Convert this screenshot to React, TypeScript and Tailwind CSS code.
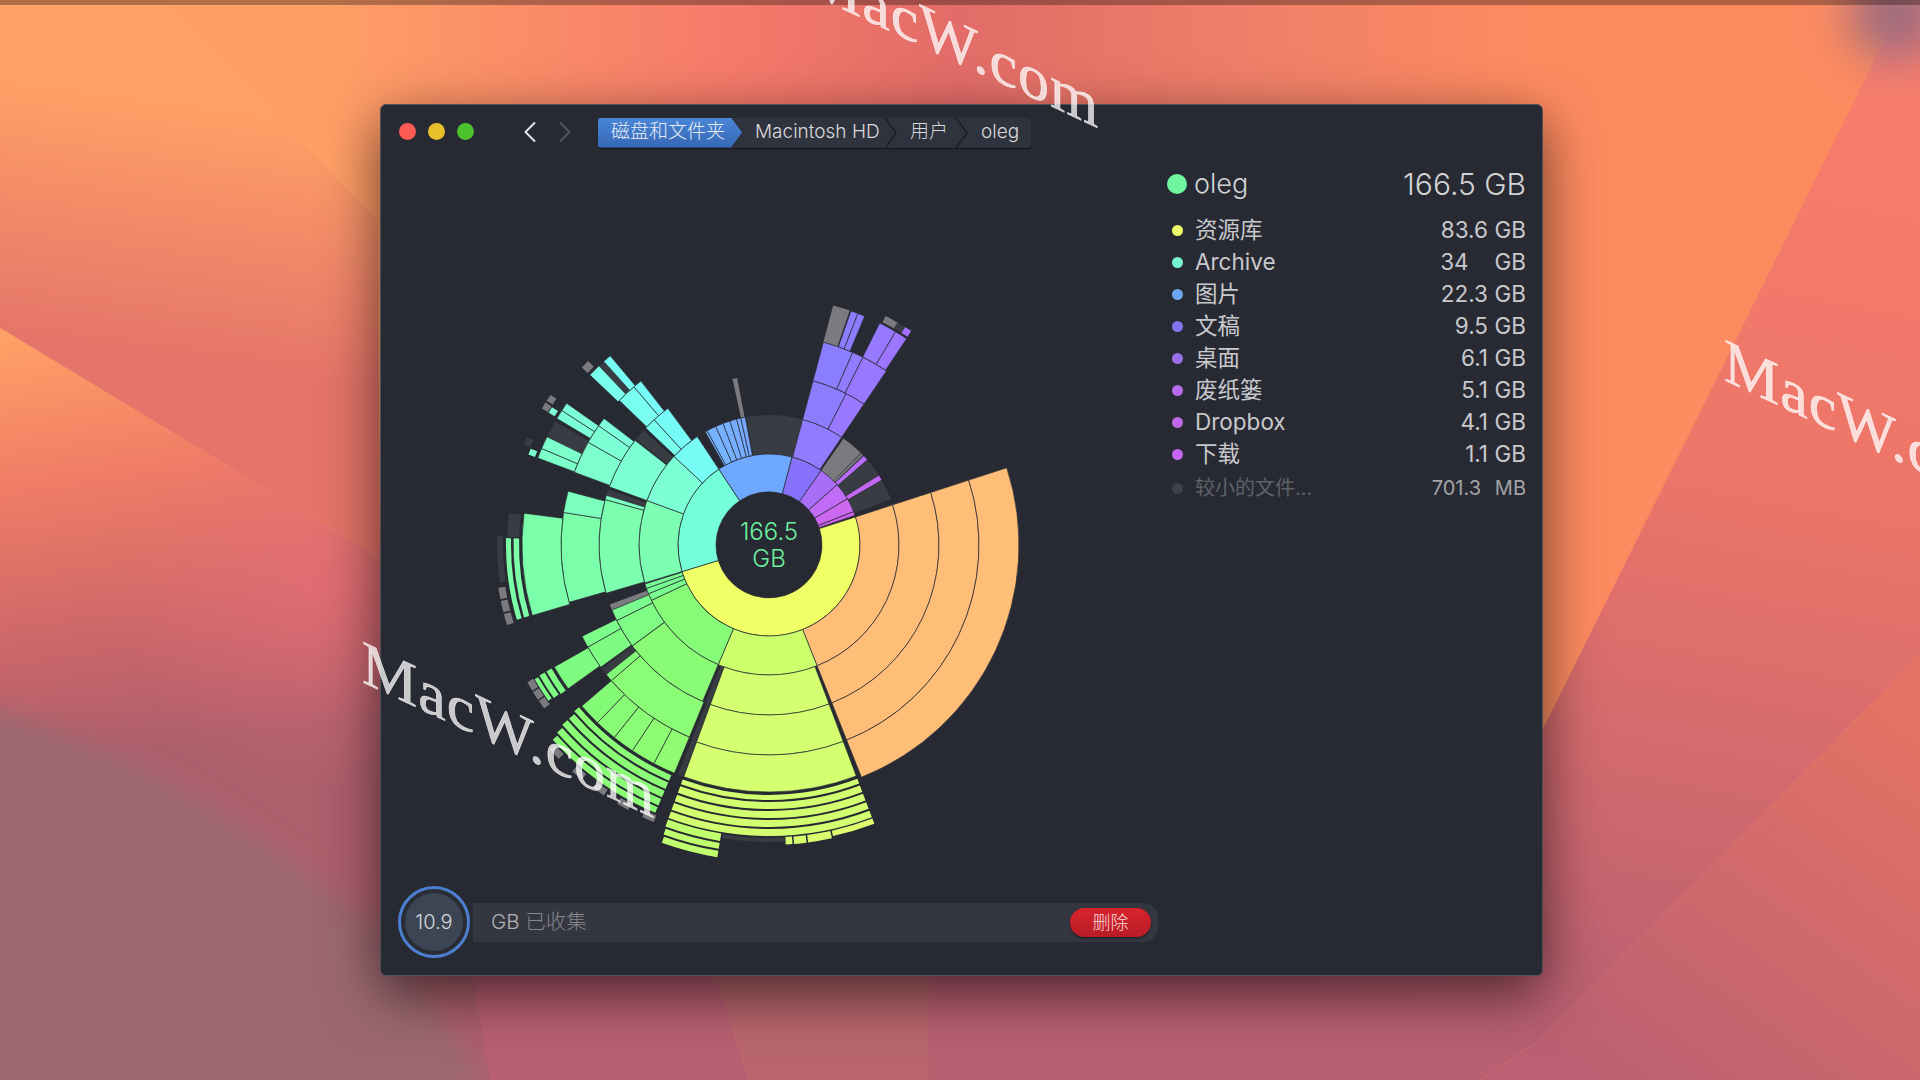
import { ChevronLeft, ChevronRight } from "lucide-react";

// clockwise degrees from 12 o'clock
type Seg = [number, number, number, number, string?];

const DARK = "#3a3c43";
const GREY = "#7b7b7f";
const ORANGE = "#ffbe78";

const STOPS: [number, string][] = [
  [159, "#e2fb6e"],
  [180, "#d2ff70"],
  [198, "#bcff6e"],
  [205, "#90fc72"],
  [230, "#82fb78"],
  [250, "#78fd94"],
  [270, "#7cffb0"],
  [295, "#7cffcc"],
  [308, "#7cffdc"],
  [318, "#78fff2"],
  [325, "#74f4ff"],
  [328, "#78b8ff"],
  [350, "#74a8ff"],
  [375, "#8480ff"],
  [390, "#9878ff"],
  [400, "#a870ff"],
  [415, "#c068f8"],
  [430, "#d060f0"],
];

function colorAt(deg: number) {
  const a = deg < 72 ? deg + 360 : deg;
  for (let i = 1; i < STOPS.length; i++) {
    if (a <= STOPS[i][0]) {
      const [a0, c0] = STOPS[i - 1];
      const [a1, c1] = STOPS[i];
      const t = Math.max(0, (a - a0) / (a1 - a0));
      const mix = (p: number) =>
        Math.round(parseInt(c0.slice(p, p + 2), 16) * (1 - t) + parseInt(c1.slice(p, p + 2), 16) * t);
      return `rgb(${mix(1)},${mix(3)},${mix(5)})`;
    }
  }
  return STOPS[STOPS.length - 1][1];
}

const CX = 388;
const CY = 387;

function arc(r0: number, r1: number, a0: number, a1: number) {
  const pt = (r: number, a: number) => {
    const t = (a * Math.PI) / 180;
    return `${(CX + r * Math.sin(t)).toFixed(2)} ${(CY - r * Math.cos(t)).toFixed(2)}`;
  };
  const big = a1 - a0 > 180 ? 1 : 0;
  return `M${pt(r0, a0)}A${r0} ${r0} 0 ${big} 1 ${pt(r0, a1)}L${pt(r1, a1)}A${r1} ${r1} 0 ${big} 0 ${pt(r1, a0)}Z`;
}

const SOLID: Seg[] = [
  // first ring
  [53, 91, 72, 253, "#f0ff66"],
  [53, 91, 253, 326.5, "#74ffd8"],
  [53, 91, 326.5, 374.7, "#6fa8ff"],
  [53, 91, 14.7, 35, "#8672fa"],
  [53, 91, 35, 48.5, "#a86ef8"],
  [53, 91, 48.5, 59.5, "#c06cf6"],
  [53, 91, 59.5, 68.5, "#cc68f0"],
  [53, 91, 68.5, 71, "#d060f0"],

  // orange branch
  [91, 130, 72, 158.3, ORANGE],
  [130, 170, 72, 158.3, ORANGE],
  [170, 210, 72, 158.3, ORANGE],
  [210, 250, 72, 158.3, ORANGE],

  // yellow green branch
  [91, 130, 158.3, 203, "#ccff6c"],
  [130, 170, 159.3, 200.2, "#d4ff70"],
  [170, 210, 159.3, 200.2, "#d4ff70"],
  [210, 247, 159.3, 200.2, "#d4ff70"],

  // green branch
  [91, 130, 203, 244.8],
  [91, 130, 244.8, 248],
  [91, 130, 248, 250.5],
  [91, 130, 250.5, 252.6],
  [130, 170, 203, 233.5],
  [130, 170, 233.6, 243.6],
  [130, 170, 243.6, 247.5],
  [170, 208, 202.5, 229.3],
  [208, 247, 202.5, 207.8],
  [208, 247, 207.8, 213.6],
  [208, 247, 213.6, 218.8],
  [208, 247, 218.8, 224],
  [208, 247, 224, 229.3],
  [170, 208, 229.3, 231.5],
  [170, 208, 234, 240.6],
  [170, 208, 240.6, 244],
  [208, 247, 234.4, 240.4],

  // mint branch
  [91, 130, 253, 290],
  [91, 130, 290, 313],
  [91, 130, 313, 326.5],
  [130, 170, 253.5, 285.5],
  [130, 170, 285.5, 287],
  [130, 170, 290, 308],
  [130, 170, 313.5, 317.5],
  [130, 170, 317.5, 323.5],
  [170, 208, 254, 279],
  [170, 208, 279, 285],
  [170, 208, 290.5, 299.6],
  [170, 208, 299.6, 305],
  [170, 208, 305, 307.5],
  [170, 208, 314, 319.5],
  [170, 208, 319.5, 322],
  [208, 247, 253.4, 277.4],
  [208, 247, 290.6, 293],
  [208, 247, 293, 296],
  [208, 247, 300.8, 303],
  [208, 247, 303, 305],
  [208, 247, 313.5, 316.5],
  [208, 247, 318, 320],

  // pictures fan
  [91, 130, 330.6, 331.6],
  [91, 130, 331.6, 335.8],
  [91, 130, 335.8, 339.3],
  [91, 130, 339.3, 342.5],
  [91, 130, 342.5, 345.6],
  [91, 130, 345.6, 347.5],
  [91, 130, 347.5, 349.5],

  // documents
  [91, 130, 15, 34],
  [130, 170, 15, 27],
  [130, 170, 27, 34],
  [170, 210, 15, 23.5],
  [170, 210, 23.5, 26.6],
  [170, 210, 26.6, 34],
  [210, 248, 19.3, 21],
  [210, 248, 21, 22.7],
  [210, 248, 26.5, 30.7],
  [210, 248, 30.7, 33.7],
];

// flat pieces and thin strips, no outline
const FLAT: Seg[] = [
  [91, 130, 350, 375, DARK],
  [130, 170, 347.6, 349.2, GREY],
  [210, 248, 15, 19, GREY],
  [250, 257, 27, 30, GREY],
  [250, 257, 30, 32, DARK],
  [250, 257, 32, 33.6, "#a070ff"],
  [91, 130, 35, 45, GREY],
  [91, 130, 45.3, 46.3, GREY],
  [91, 130, 46.8, 49, "#b86cf8"],
  [91, 130, 49.3, 57.5, DARK],
  [91, 130, 57.7, 60, "#c468f4"],
  [91, 130, 60.3, 69.5, DARK],

  [130, 170, 200.4, 202, DARK],
  [170, 247, 200.4, 201.6, DARK],
  [130, 170, 247.5, 249.5, GREY],
  [170, 208, 231.5, 233.5, DARK],
  [130, 170, 287, 289, DARK],
  [130, 170, 308.5, 312.5, DARK],
  [208, 247, 296, 300, DARK],
  [208, 247, 316.5, 318, DARK],

  [250, 256, 234.4, 240.4],
  [258, 264, 234.6, 240.4],
  [266, 270, 234.8, 240.2],
  [271, 278, 234, 235.9, GREY],
  [271, 278, 236.2, 238.1, GREY],
  [271, 278, 238.4, 240.4, GREY],

  [250, 255.5, 253.5, 271.5],
  [258, 263, 253.5, 271.5],
  [250, 262, 271.8, 277, DARK],
  [266, 272, 262, 272, DARK],
  [267, 274, 253, 255.4, GREY],
  [267, 274, 255.8, 258.2, GREY],
  [267, 274, 258.6, 261, GREY],
  [250, 257, 290.6, 292, "#7cffd0"],
  [258, 265, 292.3, 294, DARK],
  [250, 257, 301, 302.4, "#7cffd8"],
  [258, 265, 301, 302.5, GREY],
  [258, 265, 303, 304.5, GREY],
  [250, 258, 313.5, 315.5, GREY],

  // rings under the yellow green branch
  [250, 255, 159.3, 200.2],
  [257, 264, 159.3, 200.2],
  [266, 273, 159.3, 200.2],
  [275, 282, 159.3, 200.2],
  [284, 291, 159.3, 200.2],
  [292.5, 298, 159.3, 167.6],
  [292.5, 300, 167.9, 172.5],
  [292.5, 300, 172.8, 175.2],
  [292.5, 300, 175.5, 176.8],
  [293, 297, 177, 189, DARK],
  [292.5, 300, 189.4, 200.2],
  [302, 308, 189.4, 200],
  [310, 316.5, 189.4, 199.8],

  // rings under the green fan
  [250, 256, 203, 229.5],
  [258, 265, 203, 229],
  [267, 274, 203, 229],
  [276, 283, 203, 228.5],
  [285, 291, 203, 228],
  [293, 300, 202.6, 205, GREY],
  [293, 300, 208, 210.4, GREY],
  [293, 300, 213.4, 215.8, GREY],
  [293, 300, 218.6, 221, GREY],
  [293, 300, 224.5, 227, GREY],
];

const ROWS = [
  { name: "资源库", value: "83.6", unit: "GB", dot: "#eefc6c" },
  { name: "Archive", value: "34", unit: "GB", dot: "#74f5cf" },
  { name: "图片", value: "22.3", unit: "GB", dot: "#6fa6f2" },
  { name: "文稿", value: "9.5", unit: "GB", dot: "#7f74ee" },
  { name: "桌面", value: "6.1", unit: "GB", dot: "#9a70ea" },
  { name: "废纸篓", value: "5.1", unit: "GB", dot: "#b56bea" },
  { name: "Dropbox", value: "4.1", unit: "GB", dot: "#bf68e6" },
  { name: "下载", value: "1.1", unit: "GB", dot: "#c766ee" },
];

function Wallpaper() {
  return (
    <svg viewBox="0 0 1920 1080" className="absolute inset-0 h-full w-full">
      <defs>
        <linearGradient id="top" x1="0" y1="0" x2="1920" y2="0" gradientUnits="userSpaceOnUse">
          <stop offset="0.17" stopColor="#ff9f66" />
          <stop offset="0.38" stopColor="#f67a6a" />
          <stop offset="0.5" stopColor="#e26c68" />
          <stop offset="0.66" stopColor="#f08068" />
          <stop offset="0.8" stopColor="#fe8b60" />
        </linearGradient>
        <linearGradient id="leftTop" x1="60" y1="40" x2="20" y2="340" gradientUnits="userSpaceOnUse">
          <stop offset="0.15" stopColor="#ffa066" />
          <stop offset="1" stopColor="#e5746a" />
        </linearGradient>
        <linearGradient id="leftMid" x1="0" y1="340" x2="60" y2="760" gradientUnits="userSpaceOnUse">
          <stop offset="0" stopColor="#ffa066" />
          <stop offset="0.35" stopColor="#f07c66" />
          <stop offset="0.75" stopColor="#c9666a" />
          <stop offset="1" stopColor="#ad5f6c" />
        </linearGradient>
        <linearGradient id="salmon" x1="1900" y1="40" x2="1700" y2="1060" gradientUnits="userSpaceOnUse">
          <stop offset="0" stopColor="#fa7e6c" />
          <stop offset="0.45" stopColor="#ec7569" />
          <stop offset="1" stopColor="#b85f72" />
        </linearGradient>
        <linearGradient id="corner" x1="1880" y1="700" x2="1600" y2="1080" gradientUnits="userSpaceOnUse">
          <stop offset="0" stopColor="#e47265" />
          <stop offset="1" stopColor="#bb6072" />
        </linearGradient>
        <radialGradient id="pink" cx="320" cy="590" r="200" gradientUnits="userSpaceOnUse">
          <stop offset="0" stopColor="#f0707c" stopOpacity="0.5" />
          <stop offset="1" stopColor="#f0707c" stopOpacity="0" />
        </radialGradient>
        <filter id="soft" x="-20%" y="-20%" width="140%" height="140%">
          <feGaussianBlur stdDeviation="12" />
        </filter>
        <filter id="softer" x="-100%" y="-100%" width="300%" height="300%">
          <feGaussianBlur stdDeviation="24" />
        </filter>
      </defs>
      <rect width="1920" height="1080" fill="url(#top)" />
      <path d="M0 0H165L378 221L380 558L0 328Z" fill="url(#leftTop)" />
      <path d="M0 328L380 558L720 800V1080H0Z" fill="url(#leftMid)" />
      <path d="M0 328L380 558L720 800V1080H0Z" fill="url(#pink)" />
      <path d="M-40 700C130 740 260 830 380 928L493 1090H-40Z" fill="#9c6870" filter="url(#soft)" />
      <path d="M470 960H711L749 1080H490Z" fill="#b85f72" />
      <path d="M711 960H929L967 1080H749Z" fill="#b8666c" />
      <path d="M1887 35L1920 0V654L1540 1040L1480 1080H929V760L1540 735Z" fill="url(#salmon)" />
      <path d="M1920 654V1080H1480L1540 1040Z" fill="url(#corner)" />
      <circle cx="1895" cy="14" r="46" fill="#9a6a80" filter="url(#softer)" />
    </svg>
  );
}

function Watermark({ className }: { className: string }) {
  return (
    <div
      className={`absolute z-20 origin-top-left skew-y-[25deg] font-['Liberation_Serif',serif] text-[62px] leading-none tracking-[1px] whitespace-nowrap text-white/75 [-webkit-text-stroke:0.6px_rgba(255,255,255,0.75)] ${className}`}
    >
      MacW.com
    </div>
  );
}

function Sunburst() {
  return (
    <svg width="786" height="728" className="shrink-0">
      {FLAT.map(([r0, r1, a0, a1, fill], i) => (
        <path key={i} d={arc(r0, r1, a0, a1)} fill={fill ?? colorAt((a0 + a1) / 2)} />
      ))}
      {SOLID.map(([r0, r1, a0, a1, fill], i) => (
        <path
          key={i}
          d={arc(r0, r1, a0, a1)}
          fill={fill ?? colorAt((a0 + a1) / 2)}
          stroke="#2a2c33"
          strokeOpacity="0.7"
          strokeWidth="1"
        />
      ))}
      <text x={CX} y={CY - 5} textAnchor="middle" fontSize="24" fontWeight="300" fill="#6cf0a0">
        166.5
      </text>
      <text x={CX} y={CY + 22} textAnchor="middle" fontSize="24" fontWeight="300" fill="#6cf0a0">
        GB
      </text>
    </svg>
  );
}

function Crumb({ label, width, active }: { label: string; width: string; active?: boolean }) {
  return (
    <div className={`relative flex items-center pl-[13px] ${width}`}>
      {active ? (
        <div className="absolute inset-0 rounded-l-[3px] bg-gradient-to-b from-[#4a86d8] to-[#3667b4] [clip-path:polygon(0_0,calc(100%-11px)_0,100%_50%,calc(100%-11px)_100%,0_100%)]" />
      ) : (
        <svg width="12" height="30" viewBox="0 0 12 30" className="absolute top-0 right-0" fill="none">
          <path d="M0 0L11 15L0 30" stroke="#1c1e25" strokeWidth="1.5" />
        </svg>
      )}
      <span className={`relative ${active ? "text-[#e8eef8]" : "text-[#d8d9dc]"}`}>{label}</span>
    </div>
  );
}

function Row({ name, value, unit, dot, dim }: { name: string; value: string; unit: string; dot: string; dim?: boolean }) {
  const whole = value.indexOf(".") < 0;
  return (
    <div className="flex h-[32px] items-center text-[22.5px] font-normal">
      <div className="flex w-[20px] shrink-0 justify-center">
        <div className="h-[11px] w-[11px] rounded-full" style={{ backgroundColor: dot }} />
      </div>
      <div className={`ml-[8px] flex-1 ${dim ? "text-[#5f6169] text-[20px]" : "text-[#c8c9cd]"}`}>{name}</div>
      <div className={`text-right ${dim ? "text-[20px] text-[#a2a3a7]" : "text-[#c8c9cd]"}`}>
        {value}
        {whole && <span className="invisible">.0</span>}
      </div>
      <div className={`text-right ${dim ? "w-[45px] text-[20px] text-[#a2a3a7]" : "w-[38px] text-[#c8c9cd]"}`}>{unit}</div>
    </div>
  );
}

export default function App() {
  return (
    <div className="relative h-[1080px] w-[1920px] overflow-hidden font-['Inter','Noto_Sans_CJK_SC',sans-serif]">
      <Wallpaper />
      <div className="absolute top-0 left-0 h-[5px] w-full bg-black/30" />

      {/* app window */}
      <div className="absolute top-[104px] left-[380px] flex h-[872px] w-[1163px] flex-col rounded-[6px] border border-[#505157] bg-[#282a33] shadow-[0_18px_55px_rgba(0,0,0,0.6)]">
        <div className="flex h-[53px] shrink-0 items-center pl-[18px]">
          <div className="h-[17px] w-[17px] rounded-full bg-[#fc5a53]" />
          <div className="ml-[12px] h-[17px] w-[17px] rounded-full bg-[#e8c02c]" />
          <div className="ml-[12px] h-[17px] w-[17px] rounded-full bg-[#4ec12e]" />
          <ChevronLeft size={36} strokeWidth={1.3} className="ml-[38px] text-[#e4e4e6]" />
          <ChevronRight size={36} strokeWidth={1.3} className="ml-[-1px] text-[#55575e]" />
          <div className="mt-[2px] ml-[15px] flex h-[30px] rounded-[3px] bg-[#2f333d] text-[19px] font-light shadow-[0_1px_1px_rgba(0,0,0,0.5)]">
            <Crumb label="磁盘和文件夹" width="w-[144px]" active />
            <Crumb label="Macintosh HD" width="w-[155px]" />
            <Crumb label="用户" width="w-[71px]" />
            <div className="flex w-[63px] items-center pl-[13px] text-[#d8d9dc]">oleg</div>
          </div>
        </div>

        <div className="flex flex-1">
          <Sunburst />
          <div className="flex-1 pt-[10px] pr-[16px]">
            <div className="flex h-[32px] items-center font-light text-[#d2d3d6]">
              <div className="h-[20px] w-[20px] shrink-0 rounded-full bg-[#6df5a0]" />
              <div className="ml-[7px] flex-1 text-[27px]">oleg</div>
              <div className="text-[30px]">166.5 GB</div>
            </div>
            <div className="mt-[14px]">
              {ROWS.map((r) => (
                <Row key={r.name} {...r} />
              ))}
              <div className="mt-[2px]">
                <Row name="较小的文件..." value="701.3" unit="MB" dot="#40424a" dim />
              </div>
            </div>
          </div>
        </div>

        <div className="mb-[18px] ml-[17px] flex w-[760px] shrink-0 items-center">
          <div className="flex h-[72px] w-[72px] shrink-0 items-center justify-center rounded-full border-[3px] border-[#4c7fcf] bg-[#2a2c34]">
            <div className="flex h-[58px] w-[58px] items-center justify-center rounded-full bg-[#3b4553] text-[20px] font-light text-[#d6d7da]">
              10.9
            </div>
          </div>
          <div className="ml-[3px] flex h-[39px] flex-1 items-center justify-between rounded-r-[14px] bg-[#343640] pr-[7px] pl-[18px] text-[20.5px] font-light">
            <div className="text-[#b2b3b7]">
              GB <span className="text-[#86878d]">已收集</span>
            </div>
            <div className="flex h-[29px] w-[81px] items-center justify-center rounded-full bg-gradient-to-b from-[#d8242e] to-[#b81c26] text-[18px] text-[#f8dcdc] shadow-[0_1px_2px_rgba(0,0,0,0.6)]">
              删除
            </div>
          </div>
        </div>
      </div>

      <Watermark className="top-[-60px] left-[806px]" />
      <Watermark className="top-[630px] left-[362px]" />
      <Watermark className="top-[328px] left-[1724px]" />
    </div>
  );
}
